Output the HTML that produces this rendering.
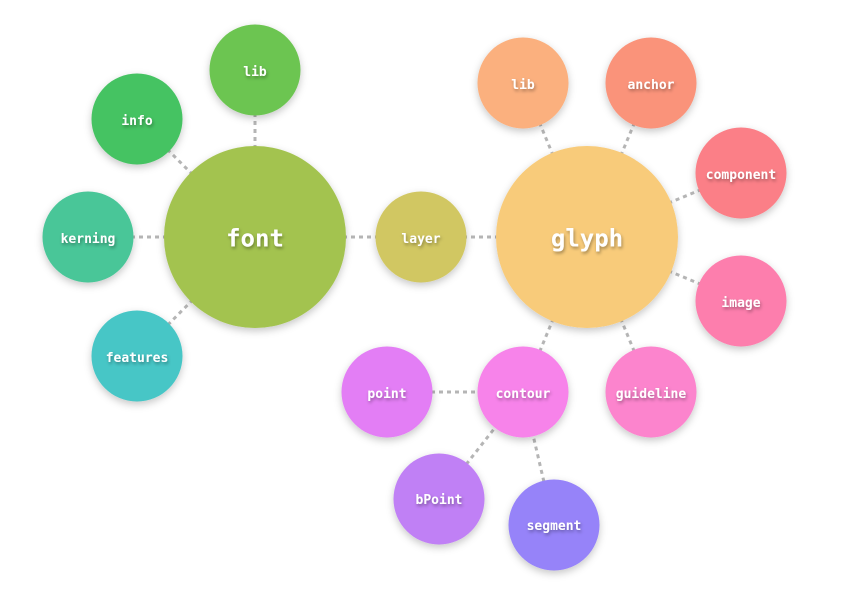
<!DOCTYPE html>
<html><head><meta charset="utf-8"><style>
html,body{margin:0;padding:0;background:#fff;width:842px;height:595px;overflow:hidden}
svg{display:block}
text{font-family:"DejaVu Sans Mono","Liberation Mono",monospace;font-weight:bold;fill:#fff;text-anchor:middle;dominant-baseline:central}
</style></head><body>
<svg width="842" height="595" viewBox="0 0 842 595">
<defs>
<filter id="s" x="-30%" y="-30%" width="160%" height="160%"><feDropShadow dx="0" dy="3" stdDeviation="4" flood-color="#000" flood-opacity="0.22"/></filter>
<filter id="t" x="-20%" y="-50%" width="140%" height="200%"><feDropShadow dx="1" dy="2" stdDeviation="1.5" flood-color="#000" flood-opacity="0.35"/></filter>
</defs>
<g stroke="#b5b5b5" stroke-width="3" stroke-dasharray="4,4">
<line x1="255" y1="237" x2="255" y2="70"/>
<line x1="255" y1="237" x2="137" y2="119"/>
<line x1="255" y1="237" x2="88" y2="237"/>
<line x1="255" y1="237" x2="137" y2="356"/>
<line x1="255" y1="237" x2="587" y2="237"/>
<line x1="587" y1="237" x2="523" y2="83"/>
<line x1="587" y1="237" x2="651" y2="83"/>
<line x1="587" y1="237" x2="741" y2="173"/>
<line x1="587" y1="237" x2="741" y2="301"/>
<line x1="587" y1="237" x2="651" y2="392"/>
<line x1="587" y1="237" x2="523" y2="392"/>
<line x1="523" y1="392" x2="387" y2="392"/>
<line x1="523" y1="392" x2="439" y2="499"/>
<line x1="523" y1="392" x2="554" y2="525"/>
</g>
<g filter="url(#s)">
<circle cx="255" cy="70" r="45.5" fill="#6cc551"/>
<circle cx="137" cy="119" r="45.5" fill="#45c362"/>
<circle cx="88" cy="237" r="45.5" fill="#48c698"/>
<circle cx="137" cy="356" r="45.5" fill="#47c6c6"/>
<circle cx="255" cy="237" r="91" fill="#a3c34f"/>
<circle cx="421" cy="237" r="45.5" fill="#d1c762"/>
<circle cx="587" cy="237" r="91" fill="#f8cb7a"/>
<circle cx="523" cy="83" r="45.5" fill="#fbb07e"/>
<circle cx="651" cy="83" r="45.5" fill="#fa937a"/>
<circle cx="741" cy="173" r="45.5" fill="#fb7f87"/>
<circle cx="741" cy="301" r="45.5" fill="#fd7ead"/>
<circle cx="651" cy="392" r="45.5" fill="#fc84cd"/>
<circle cx="523" cy="392" r="45.5" fill="#f783ea"/>
<circle cx="387" cy="392" r="45.5" fill="#e37ef5"/>
<circle cx="439" cy="499" r="45.5" fill="#c080f5"/>
<circle cx="554" cy="525" r="45.5" fill="#9683f9"/>
</g>
<g filter="url(#t)" font-size="13" transform="translate(0,1.5)">
<text x="255" y="71">lib</text>
<text x="137" y="120">info</text>
<text x="88" y="238">kerning</text>
<text x="137" y="357">features</text>
<text x="255" y="237" font-size="24">font</text>
<text x="421" y="238">layer</text>
<text x="587" y="237" font-size="24">glyph</text>
<text x="523" y="84">lib</text>
<text x="651" y="84">anchor</text>
<text x="741" y="174">component</text>
<text x="741" y="302">image</text>
<text x="651" y="393">guideline</text>
<text x="523" y="393">contour</text>
<text x="387" y="393">point</text>
<text x="439" y="499">bPoint</text>
<text x="554" y="525">segment</text>
</g>
</svg>
</body></html>
